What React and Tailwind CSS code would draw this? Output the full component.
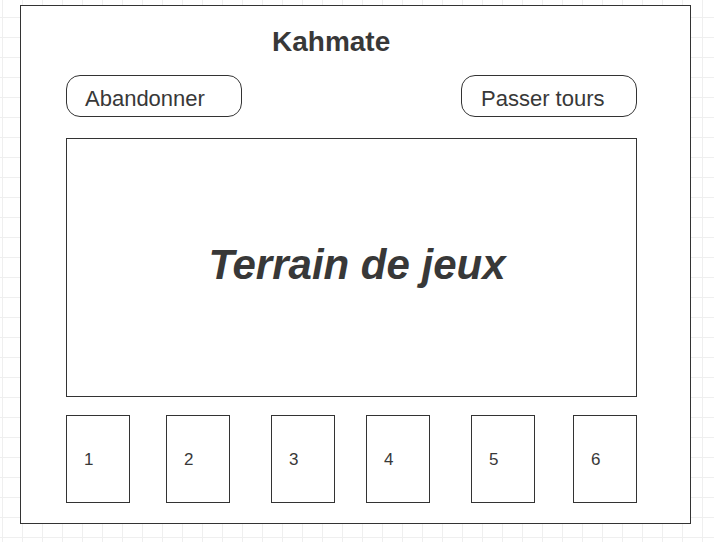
const cartes = [
  { num: '1', ml: 'ml-0' },
  { num: '2', ml: 'ml-[36px]' },
  { num: '3', ml: 'ml-[41px]' },
  { num: '4', ml: 'ml-[31px]' },
  { num: '5', ml: 'ml-[41px]' },
  { num: '6', ml: 'ml-[38px]' },
];

const App = () => {
  return (
    <div
      className="w-[714px] h-[542px] overflow-hidden bg-white pt-[5px] pl-[20px] text-[#383838] bg-[linear-gradient(to_right,#efefef_1px,transparent_1px),linear-gradient(to_bottom,#efefef_1px,transparent_1px)] bg-size-[20px_20px] bg-position-[2px_17px]"
      style={{ fontFamily: '"Liberation Sans", Arial, sans-serif' }}
    >
      <div className="w-[671px] h-[519px] border border-[#333333] bg-white pl-[45px]">
        {/* Titre */}
        <h1 className="mt-[20px] ml-[206px] h-[32px] leading-[32px] text-[28px] font-bold">
          Kahmate
        </h1>

        {/* Boutons */}
        <div className="mt-[17px] w-[571px] flex justify-between">
          <button className="w-[176px] h-[42px] border border-[#333333] rounded-[14px] flex items-center pl-[18px] pt-[4px] text-[22px] bg-white">
            Abandonner
          </button>
          <button className="w-[176px] h-[42px] border border-[#333333] rounded-[14px] flex items-center pl-[19px] pt-[4px] text-[22px] bg-white">
            Passer tours
          </button>
        </div>

        {/* Terrain */}
        <div className="mt-[21px] w-[571px] h-[259px] border border-[#333333] flex items-center justify-center pl-[11px] pb-[5px]">
          <span className="text-[42px] font-bold italic leading-none">Terrain de jeux</span>
        </div>

        {/* Cartes */}
        <div className="mt-[18px] flex">
          {cartes.map((c) => (
            <div
              key={c.num}
              className={`${c.ml} w-[64px] h-[88px] border border-[#333333] flex items-center pl-[17px] pt-[1px] text-[17px]`}
            >
              {c.num}
            </div>
          ))}
        </div>
      </div>
    </div>
  );
};

export default App;
